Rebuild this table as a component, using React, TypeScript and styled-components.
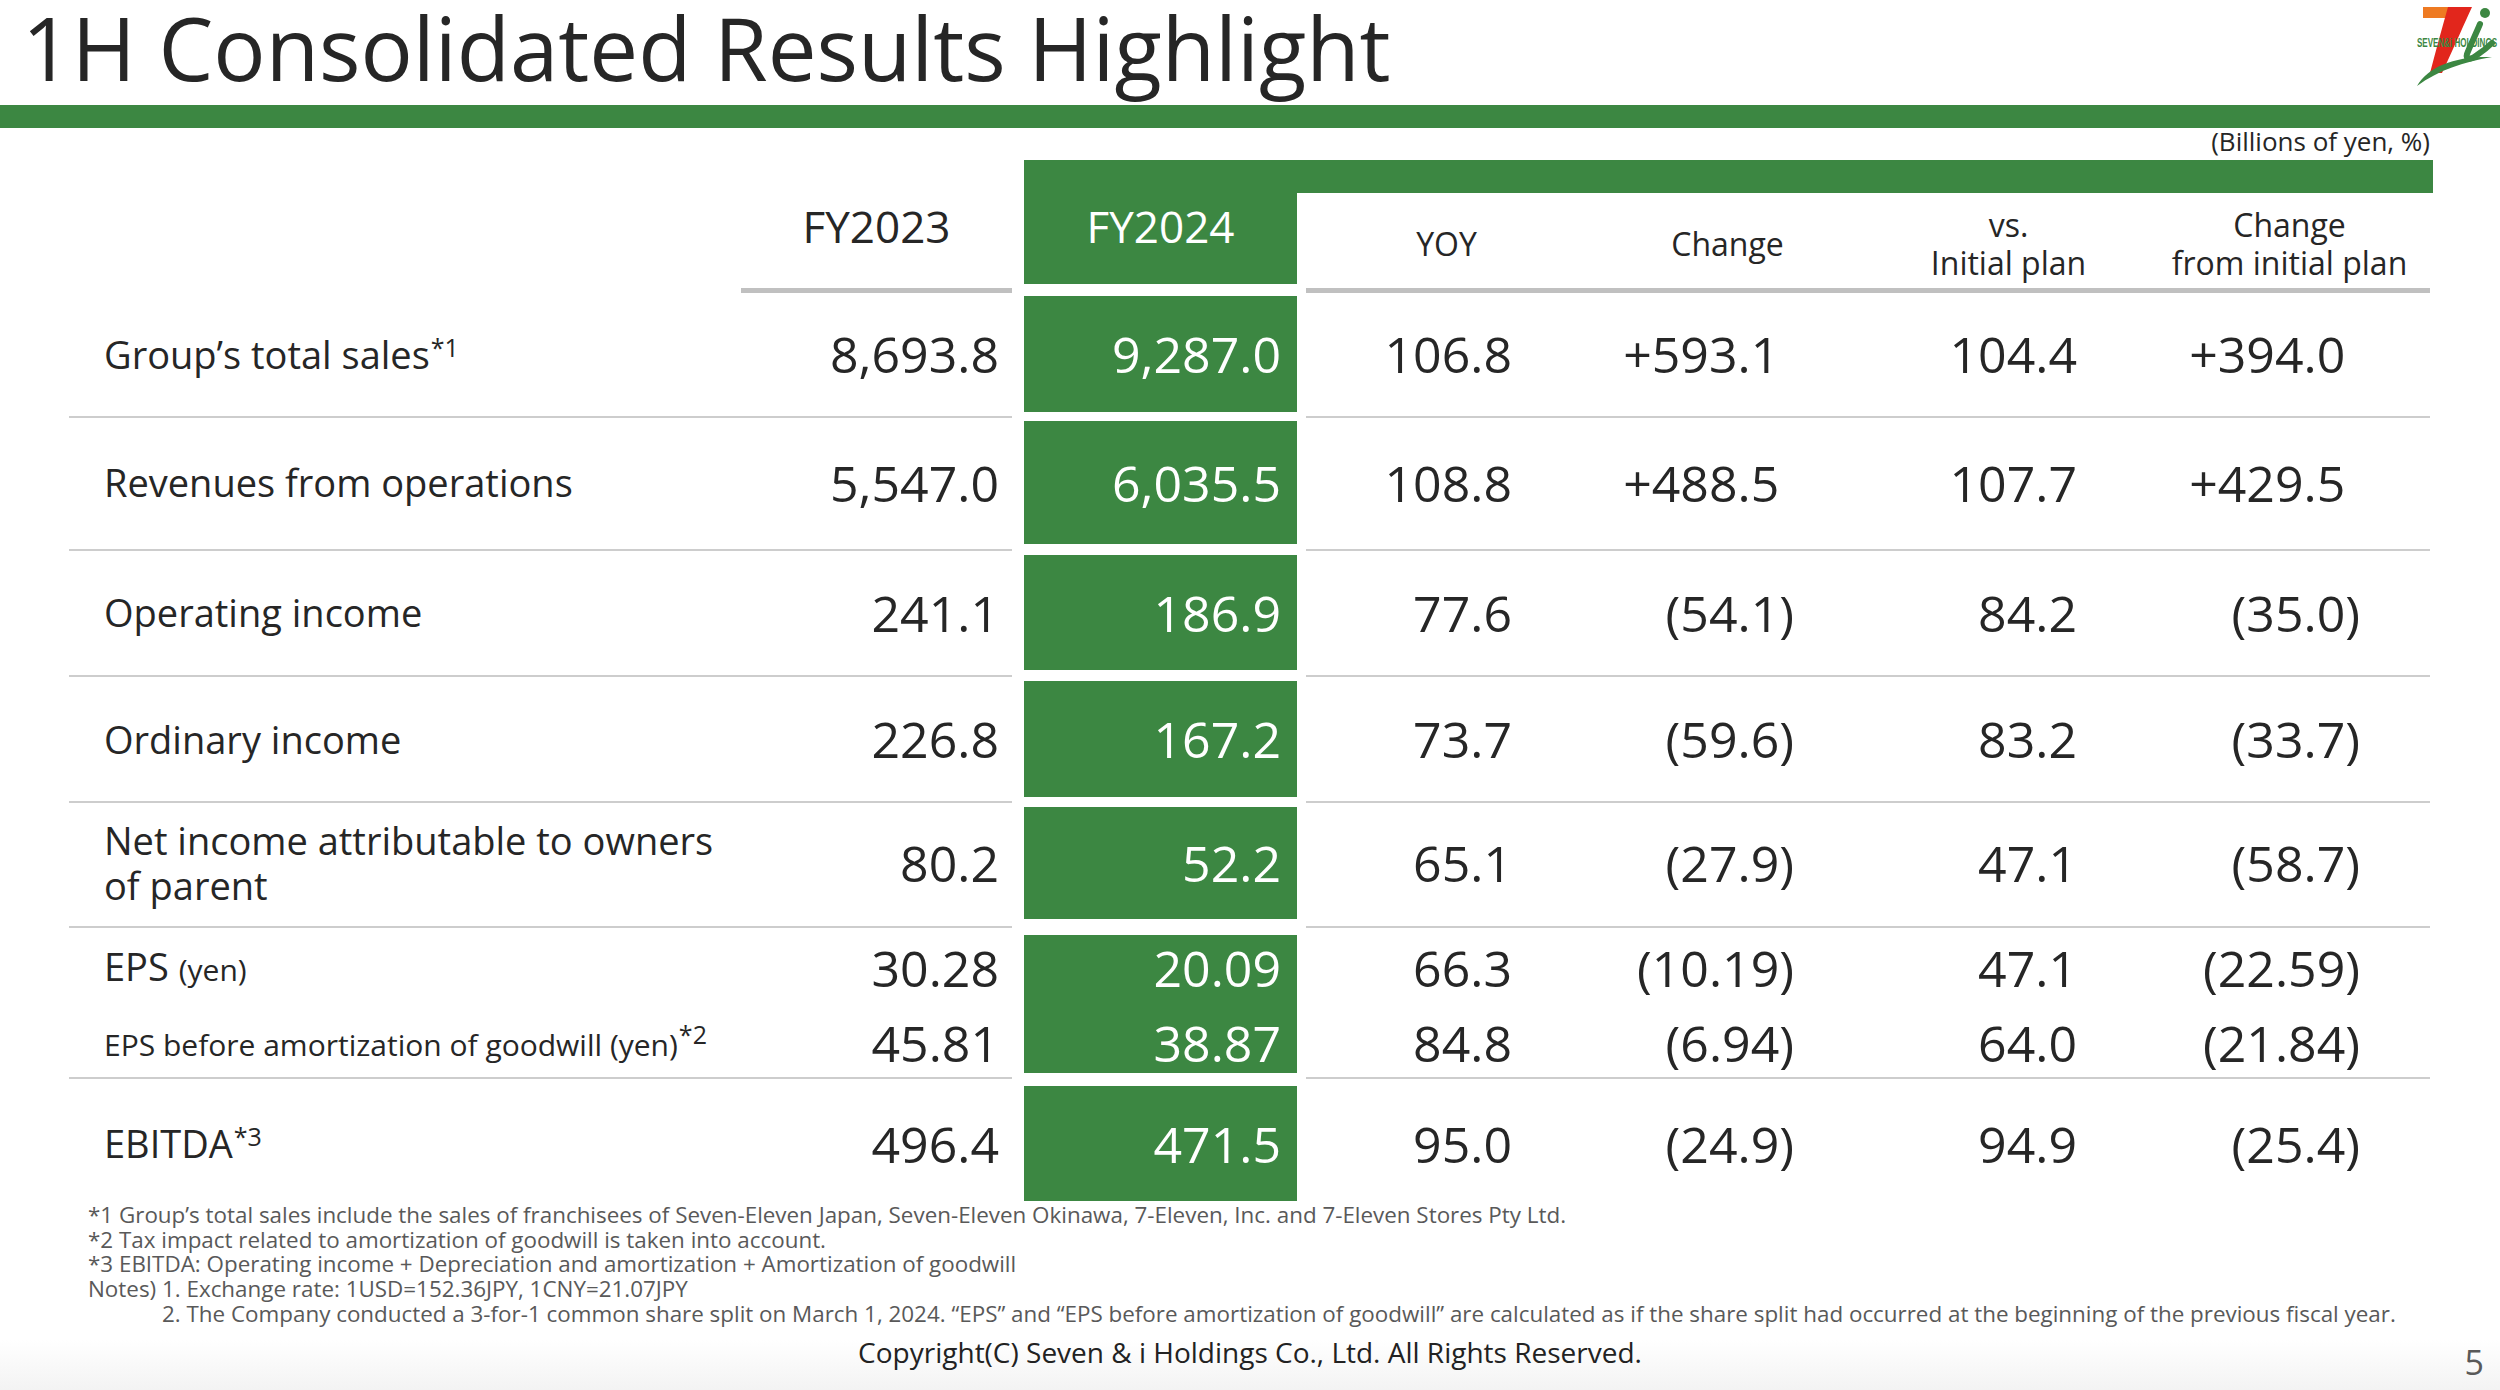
import React from "react";
import styled, { createGlobalStyle } from "styled-components";

const GREEN = "#3c8742";
const TEXT = "#262626";
const COLS = "672px 271px 12px 273px 9px 281px 281px 281px 281px";

const GlobalStyle = createGlobalStyle`
  html, body { margin: 0; padding: 0; background: #ffffff; }
  body { font-family: "Open Sans", "Noto Sans", sans-serif; }
`;

const Page = styled.div`
  width: 2500px;
  height: 1390px;
  overflow: hidden;
  display: flex;
  flex-direction: column;
  color: ${TEXT};
  font-family: "Open Sans", "Noto Sans", sans-serif;
  background: linear-gradient(to bottom, #ffffff 0, #ffffff 1340px, #f3f3f3 1390px);
`;

const TitleBar = styled.header`
  height: 105px;
  display: flex;
  justify-content: space-between;
  align-items: flex-start;
`;

const Title = styled.h1`
  margin: 0;
  padding: 3px 0 0 22px;
  font-weight: 400;
  font-size: 87px;
  line-height: 98px;
  margin-top: -5px;
  color: ${TEXT};
  white-space: nowrap;
`;

const LogoSvg = styled.svg`
  width: 85px;
  height: 90px;
  flex: none;
`;

const GreenRule = styled.div`
  height: 23px;
  background: ${GREEN};
`;

const UnitNote = styled.div`
  margin-top: 1px;
  padding-right: 70px;
  text-align: right;
  font-size: 26px;
  line-height: 24px;
`;

const Table = styled.section`
  margin-top: 7px;
  margin-left: 69px;
  width: 2361px;
`;

const HeaderGrid = styled.div`
  display: grid;
  grid-template-columns: ${COLS};
  grid-template-rows: 33px 91px;
`;

const YearHead = styled.div<{ $col: number; $green?: boolean }>`
  grid-column: ${(p) => p.$col};
  grid-row: 1 / 3;
  display: flex;
  align-items: center;
  justify-content: center;
  padding-top: 8px;
  font-size: 44px;
  background: ${(p) => (p.$green ? GREEN : "transparent")};
  color: ${(p) => (p.$green ? "#ffffff" : TEXT)};
`;

const Band = styled.div`
  grid-column: 5 / 10;
  grid-row: 1;
  background: ${GREEN};
  margin-right: -3px;
`;

const ColHead = styled.div<{ $col: number }>`
  grid-column: ${(p) => p.$col};
  grid-row: 2;
  display: flex;
  align-items: center;
  justify-content: center;
  text-align: center;
  padding-top: 11px;
  font-size: 32px;
  line-height: 38px;
`;

const RuleRow = styled.div<{ $h: number }>`
  display: grid;
  grid-template-columns: ${COLS};
  height: ${(p) => p.$h}px;
  align-items: center;
`;

const ThickLine = styled.div<{ $span: string }>`
  grid-column: ${(p) => p.$span};
  align-self: start;
  margin-top: 4px;
  height: 5px;
  background: #c0c0c0;
`;

const ThinLine = styled.div<{ $span: string }>`
  grid-column: ${(p) => p.$span};
  height: 2px;
  background: #cdcdcd;
`;

const DataRow = styled.div<{ $h: number; $shift?: number }>`
  display: grid;
  grid-template-columns: ${COLS};
  height: ${(p) => p.$h}px;
  & > * {
    padding-top: ${(p) => p.$shift ?? 0}px;
  }
`;

const Label = styled.div`
  grid-column: 1;
  display: flex;
  align-items: center;
  padding-left: 35px;
  font-size: 38px;
  line-height: 45px;
`;

const Small = styled.span`
  font-size: 30px;
`;

const Sup = styled.sup`
  font-size: 25px;
  line-height: 0;
  vertical-align: 12px;
  margin-left: 1px;
`;

const Num = styled.div<{ $col: number; $pr: number }>`
  grid-column: ${(p) => p.$col};
  display: flex;
  align-items: center;
  justify-content: flex-end;
  padding-right: ${(p) => p.$pr}px;
  font-size: 50px;
  line-height: 60px;
  white-space: nowrap;
`;

const GreenNum = styled(Num)`
  background: ${GREEN};
  color: #ffffff;
`;

const Hidden = styled.span`
  visibility: hidden;
`;

const Notes = styled.div`
  margin-top: 2px;
  padding-left: 88px;
  font-size: 22.4px;
  line-height: 24.7px;
  color: #595959;
`;

const NoteLine = styled.div<{ $indent?: boolean }>`
  padding-left: ${(p) => (p.$indent ? "74px" : "0")};
  white-space: nowrap;
`;

const Footer = styled.footer`
  margin-top: 9px;
  display: grid;
  grid-template-columns: 1fr auto 1fr;
  align-items: start;
`;

const Copyright = styled.div`
  grid-column: 2;
  font-size: 28px;
  line-height: 32px;
  color: #222222;
  white-space: nowrap;
`;

const PageNo = styled.div`
  grid-column: 3;
  justify-self: end;
  padding-right: 16px;
  margin-top: 6px;
  font-size: 34px;
  line-height: 40px;
  color: #595959;
`;

type Row = {
  label: React.ReactNode;
  fy23: string;
  fy24: string;
  yoy: string;
  chg: string;
  vs: string;
  chgPlan: string;
  h: number;
  shift?: number;
};

const paren = (v: string) =>
  v.startsWith("(") ? (
    v
  ) : (
    <>
      {v}
      <Hidden>)</Hidden>
    </>
  );

const rows: Row[] = [
  {
    label: (
      <span>
        Group’s total sales<Sup>*1</Sup>
      </span>
    ),
    fy23: "8,693.8",
    fy24: "9,287.0",
    yoy: "106.8",
    chg: "+593.1",
    vs: "104.4",
    chgPlan: "+394.0",
    h: 116,
  },
  {
    label: <span>Revenues from operations</span>,
    fy23: "5,547.0",
    fy24: "6,035.5",
    yoy: "108.8",
    chg: "+488.5",
    vs: "107.7",
    chgPlan: "+429.5",
    h: 123,
  },
  {
    label: <span>Operating income</span>,
    fy23: "241.1",
    fy24: "186.9",
    yoy: "77.6",
    chg: "(54.1)",
    vs: "84.2",
    chgPlan: "(35.0)",
    h: 115,
  },
  {
    label: <span>Ordinary income</span>,
    fy23: "226.8",
    fy24: "167.2",
    yoy: "73.7",
    chg: "(59.6)",
    vs: "83.2",
    chgPlan: "(33.7)",
    h: 116,
  },
  {
    label: (
      <span>
        Net income attributable to owners
        <br />
        of parent
      </span>
    ),
    fy23: "80.2",
    fy24: "52.2",
    yoy: "65.1",
    chg: "(27.9)",
    vs: "47.1",
    chgPlan: "(58.7)",
    h: 112,
  },
  {
    label: (
      <span>
        EPS <Small>(yen)</Small>
      </span>
    ),
    fy23: "30.28",
    fy24: "20.09",
    yoy: "66.3",
    chg: "(10.19)",
    vs: "47.1",
    chgPlan: "(22.59)",
    h: 66,
  },
  {
    label: (
      <span>
        <Small>EPS before amortization of goodwill (yen)</Small>
        <Sup>*2</Sup>
      </span>
    ),
    fy23: "45.81",
    fy24: "38.87",
    yoy: "84.8",
    chg: "(6.94)",
    vs: "64.0",
    chgPlan: "(21.84)",
    h: 69,
    shift: 12,
  },
  {
    label: (
      <span>
        EBITDA<Sup>*3</Sup>
      </span>
    ),
    fy23: "496.4",
    fy24: "471.5",
    yoy: "95.0",
    chg: "(24.9)",
    vs: "94.9",
    chgPlan: "(25.4)",
    h: 115,
  },
];

// gap (separator) height after each row; null = no separator (EPS sub-rows)
const gaps: (number | null)[] = [9, 11, 11, 10, 16, null, 16, null];

const Logo = () => (
  <LogoSvg viewBox="0 0 85 90" aria-label="Seven & i Holdings">
    <polygon points="8,7 42,7 37,18 8,18" fill="#ee7a22" />
    <path d="M33,7 L57,7 C50,22 40,45 27,73 L15,73 C21,50 27,28 33,7 Z" fill="#e2261c" />
    <path d="M2,86 C14,66 40,56 77,57 C48,62 24,70 2,86 Z" fill={GREEN} />
    <path
      d="M65,24 C60,36 55,46 52,54 C50,60 56,60 62,55 C68,51 73,47 77,43"
      fill="none"
      stroke={GREEN}
      strokeWidth="6"
      strokeLinecap="round"
    />
    <circle cx="70" cy="13" r="5" fill={GREEN} />
    <text
      x="2"
      y="47"
      textLength="80"
      lengthAdjust="spacingAndGlyphs"
      fontFamily="'Liberation Sans', Arial, sans-serif"
      fontWeight="700"
      fontSize="12.5"
      fill={GREEN}
    >
      SEVEN&amp;i HOLDINGS
    </text>
  </LogoSvg>
);

export default function App() {
  return (
    <>
      <GlobalStyle />
      <Page>
        <TitleBar>
          <Title>1H Consolidated Results Highlight</Title>
          <Logo />
        </TitleBar>
        <GreenRule />
        <UnitNote>(Billions of yen, %)</UnitNote>
        <Table>
          <HeaderGrid>
            <YearHead $col={2}>FY2023</YearHead>
            <YearHead $col={4} $green>
              FY2024
            </YearHead>
            <Band />
            <ColHead $col={6}>YOY</ColHead>
            <ColHead $col={7}>Change</ColHead>
            <ColHead $col={8}>
              vs.
              <br />
              Initial plan
            </ColHead>
            <ColHead $col={9}>
              Change
              <br />
              from initial plan
            </ColHead>
          </HeaderGrid>
          <RuleRow $h={12}>
            <ThickLine $span="2" />
            <ThickLine $span="6 / 10" />
          </RuleRow>
          {rows.map((r, i) => (
            <React.Fragment key={i}>
              <DataRow $h={r.h} $shift={r.shift}>
                <Label>{r.label}</Label>
                <Num $col={2} $pr={13}>
                  {r.fy23}
                </Num>
                <GreenNum $col={4} $pr={16}>
                  {r.fy24}
                </GreenNum>
                <Num $col={6} $pr={75}>
                  {r.yoy}
                </Num>
                <Num $col={7} $pr={74}>
                  {paren(r.chg)}
                </Num>
                <Num $col={8} $pr={72}>
                  {r.vs}
                </Num>
                <Num $col={9} $pr={70}>
                  {paren(r.chgPlan)}
                </Num>
              </DataRow>
              {gaps[i] !== null && (
                <RuleRow $h={gaps[i] as number}>
                  <ThinLine $span="1 / 3" />
                  <ThinLine $span="6 / 10" />
                </RuleRow>
              )}
            </React.Fragment>
          ))}
        </Table>
        <Notes>
          <NoteLine>
            *1 Group’s total sales include the sales of franchisees of Seven-Eleven Japan, Seven-Eleven Okinawa,
            7-Eleven, Inc. and 7-Eleven Stores Pty Ltd.
          </NoteLine>
          <NoteLine>*2 Tax impact related to amortization of goodwill is taken into account.</NoteLine>
          <NoteLine>*3 EBITDA: Operating income + Depreciation and amortization + Amortization of goodwill</NoteLine>
          <NoteLine>Notes) 1. Exchange rate: 1USD=152.36JPY, 1CNY=21.07JPY</NoteLine>
          <NoteLine $indent>
            2. The Company conducted a 3-for-1 common share split on March 1, 2024. “EPS” and “EPS before
            amortization of goodwill” are calculated as if the share split had occurred at the beginning of the
            previous fiscal year.
          </NoteLine>
        </Notes>
        <Footer>
          <Copyright>Copyright(C) Seven &amp; i Holdings Co., Ltd. All Rights Reserved.</Copyright>
          <PageNo>5</PageNo>
        </Footer>
      </Page>
    </>
  );
}
